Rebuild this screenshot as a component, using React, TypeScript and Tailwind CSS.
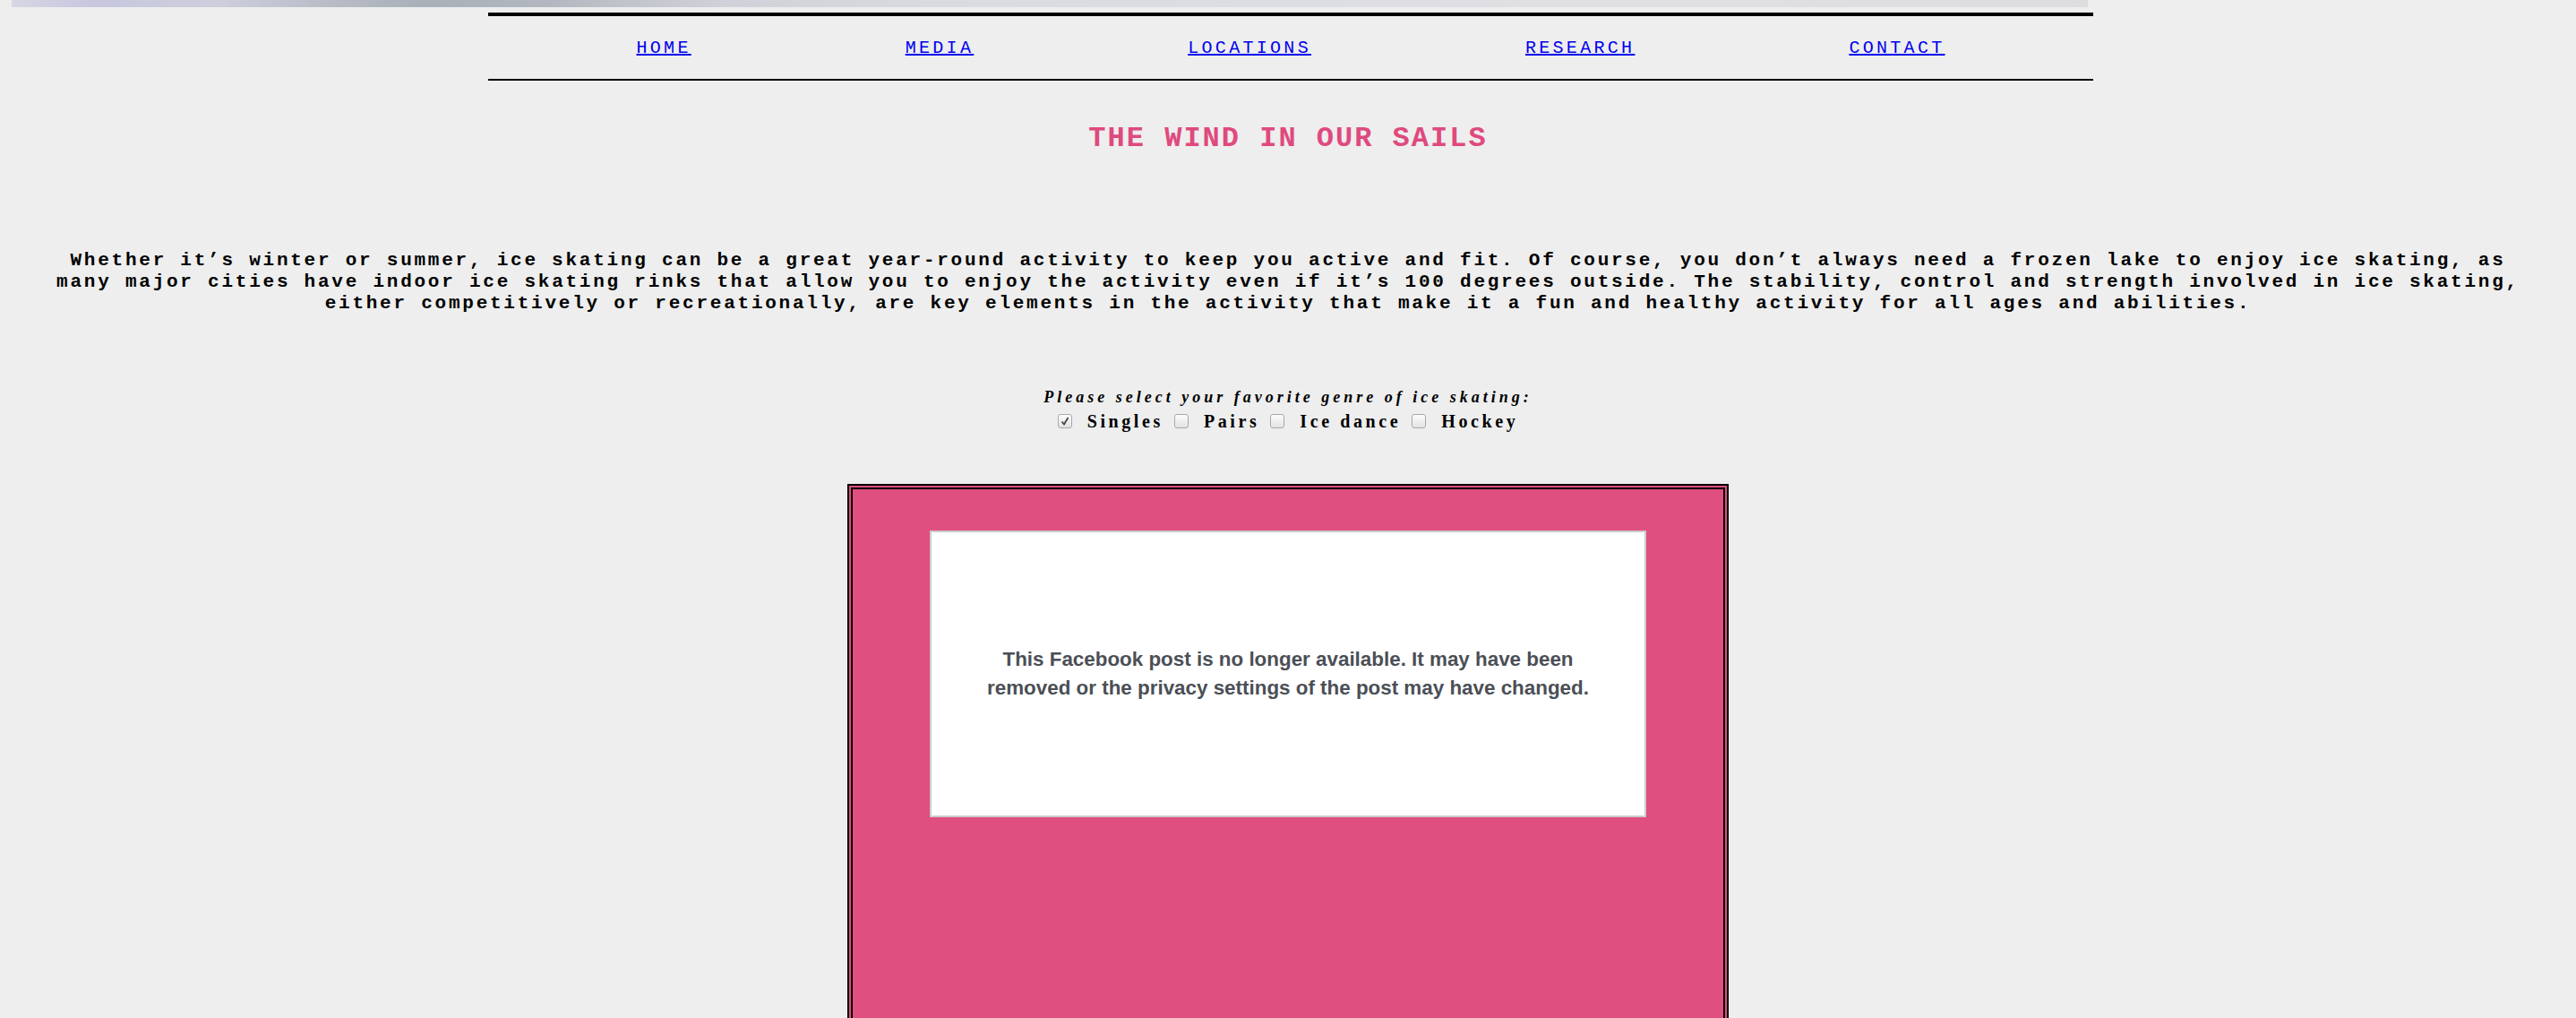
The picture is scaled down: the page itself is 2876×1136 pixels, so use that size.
import React from "react";

const links = ["HOME", "MEDIA", "LOCATIONS", "RESEARCH", "CONTACT"];

const genres = [
  { label: "Singles", checked: true },
  { label: "Pairs", checked: false },
  { label: "Ice dance", checked: false },
  { label: "Hockey", checked: false },
];

function Box({ checked }: { checked: boolean }) {
  return (
    <span className="relative inline-flex h-[16px] w-[16px] items-center justify-center rounded-[3px] border border-[#a9a9a9] bg-[linear-gradient(#fdfdfd,#e2e2e2)]">
      {checked && (
        <svg viewBox="0 0 12 12" className="h-[12px] w-[12px]">
          <path d="M2.5 6.5 L5 9.5 L9.5 2" fill="none" stroke="#444" strokeWidth="1.8" />
        </svg>
      )}
    </span>
  );
}

export default function App() {
  return (
    <div className="min-h-screen bg-[#eeeeee] pb-10">
      <div className="ml-[13px] h-[8px] w-[2318px] bg-[linear-gradient(90deg,#d6d6e4_0%,#c6c7df_4%,#cdcfdc_10%,#b9bdc8_15%,#a9b0b8_20%,#b3b8c0_26%,#cfd1d8_34%,#dadbe0_45%,#dcdde2_60%,#e0e0e4_80%,#dddde0_100%)]" />

      <nav className="ml-[545px] mt-[6px] flex h-[76px] w-[1792px] items-center justify-center gap-[239px] border-t-4 border-b-2 border-black pt-[2px] font-['Liberation_Mono',monospace] text-[20px] tracking-[3.3px]">
        {links.map((l) => (
          <a key={l} href="#" className="text-[#0000ee] underline">
            {l}
          </a>
        ))}
      </nav>

      <h1 className="mt-[45px] text-center font-['Liberation_Mono',monospace] text-[32px] font-bold leading-[40px] tracking-[2px] text-[#df4a7e]">
        THE WIND IN OUR SAILS
      </h1>

      <p className="mt-[104px] px-[50px] text-center font-['Liberation_Mono',monospace] text-[21px] font-bold leading-[23.8px] tracking-[2.76px] text-black">
        Whether it’s winter or summer, ice skating can be a great year-round activity to keep you active and fit. Of
        course, you don’t always need a frozen lake to enjoy ice skating, as many major cities have indoor ice skating
        rinks that allow you to enjoy the activity even if it’s 100 degrees outside. The stability, control and
        strength involved in ice skating, either competitively or recreationally, are key elements in the activity that
        make it a fun and healthy activity for all ages and abilities.
      </p>

      <div className="mt-[83px] flex flex-col items-center font-['Liberation_Serif',serif] font-bold text-black">
        <div className="text-[18px] italic leading-[20px] tracking-[4px]">
          Please select your favorite genre of ice skating:
        </div>
        <div className="mt-[4px] flex items-center gap-[12px] text-[20px] leading-[26px] tracking-[3.6px]">
          {genres.map((g) => (
            <label key={g.label} className="flex items-center gap-[17px]">
              <Box checked={g.checked} />
              <span>{g.label}</span>
            </label>
          ))}
        </div>
      </div>

      <div className="mx-auto mt-[57px] h-[700px] w-[984px] border-[6px] border-double border-black bg-[#df4f80] pt-[46px]">
        <div className="mx-auto flex h-[320px] w-[800px] items-center justify-center border-2 border-[#cccccc] bg-white px-10 text-center font-['Liberation_Sans',Arial,sans-serif] text-[22.4px] font-bold leading-[32px] text-[#4b4f56]">
          This Facebook post is no longer available. It may have been removed or the privacy settings of the post may
          have changed.
        </div>
      </div>
    </div>
  );
}
